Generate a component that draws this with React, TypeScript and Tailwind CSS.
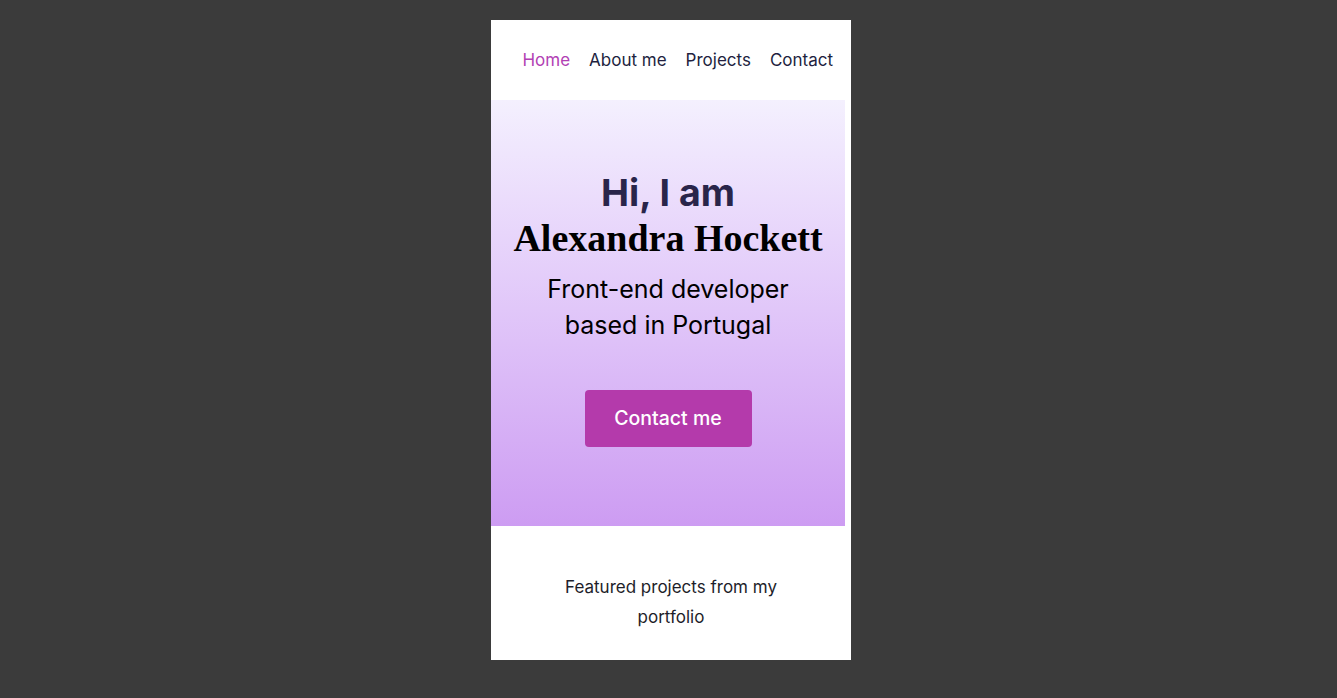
import React from 'react';

const sans = { fontFamily: 'Inter, "Noto Sans", sans-serif' };

export default function App() {
  const links = ['Home', 'About me', 'Projects', 'Contact'];

  return (
    <div className="min-h-screen w-full bg-[#3b3b3b] pt-5">
      <div
        className="ml-[491px] h-[640px] w-[360px] overflow-hidden bg-white"
        style={sans}
      >
        <nav className="flex h-20 items-center justify-end gap-[19px] pr-[18px] pt-[2px]">
          {links.map((l, i) => (
            <a
              key={l}
              className={`text-[17px] ${i === 0 ? 'text-[#b23fb4]' : 'text-[#221f3f]'}`}
            >
              {l}
            </a>
          ))}
        </nav>

        <section className="flex h-[426px] w-[354px] flex-col items-center bg-gradient-to-b from-[#f4f0fe] to-[#cd9cf2] pt-[71px] text-center">
          <h1 className="text-[37.5px] leading-[44px] font-bold text-[#29254a]">Hi, I am</h1>
          <h2
            className="whitespace-nowrap text-[38px] leading-[46px] font-bold text-black"
            style={{ fontFamily: '"Liberation Serif", serif' }}
          >
            Alexandra Hockett
          </h2>
          <p className="mt-[10px] w-[290px] text-[25px] leading-[36px] text-black">
            Front-end developer
            <br />
            based in Portugal
          </p>
          <button className="mt-[47px] h-[57px] w-[167px] rounded-[4px] bg-[#b43aab] text-[19.5px] font-medium text-white">
            Contact me
          </button>
        </section>

        <section className="flex justify-center pt-[46px]">
          <p className="w-[240px] text-center text-[17px] leading-[30px] text-[#1e1e2a]">
            Featured projects from my
            <br />
            portfolio
          </p>
        </section>
      </div>
    </div>
  );
}
